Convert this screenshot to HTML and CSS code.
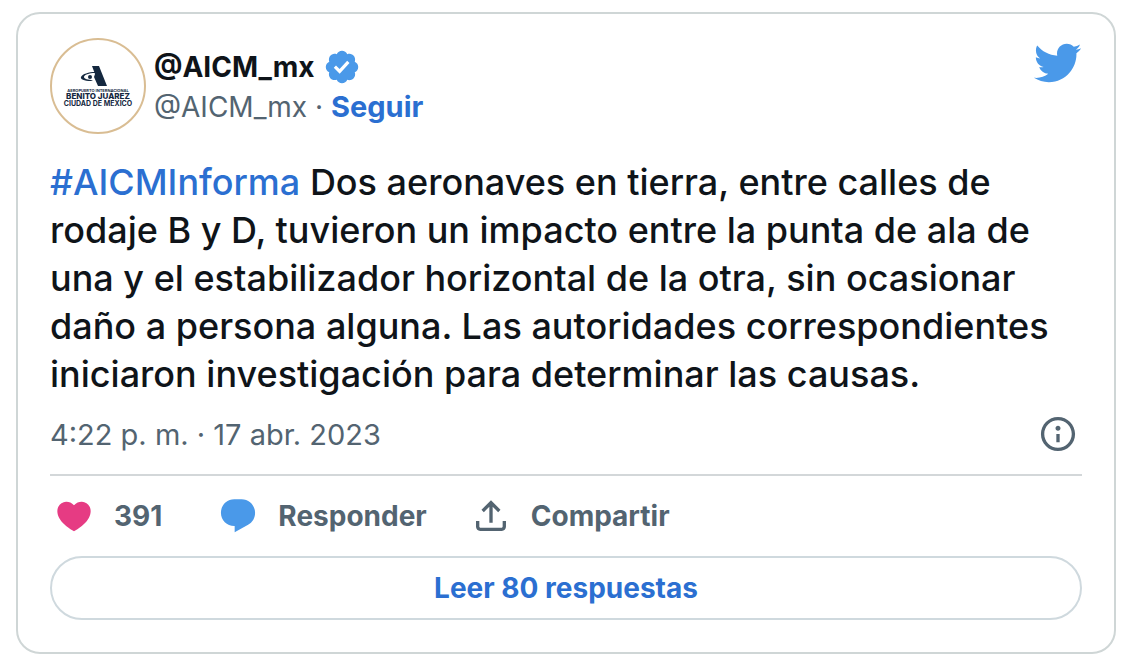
FILE: index.html
```html
<!DOCTYPE html>
<html lang="es">
    <head>
        <meta charset="utf-8">
        <meta name="viewport" content="width=device-width, initial-scale=1">
        <title>@AICM_mx</title>
        <link rel="stylesheet" href="styles.css">
    </head>
    <body>
        <article class="tweet">
            <header class="tweet-header">
                <a class="avatar" href="#" aria-label="@AICM_mx">
                    <svg viewBox="0 0 96 96">
                        <circle class="avatar-ring" cx="48" cy="48" r="47"/>
                        <path class="avatar-mark" d="M42 28h7l8 20h-9l-4-9 1-3z"/>
                        <path class="avatar-mark" d="M45 34c-6 0-13 2-14 5-1 2 3 4 10 4l2-1c-5 0-9-1-9-3 0-2 5-4 11-4z"/>
                        <circle class="avatar-mark" cx="40" cy="39" r="2"/>
                        <text class="avatar-small" x="48" y="54">AEROPUERTO INTERNACIONAL</text>
                        <text class="avatar-big" x="48" y="61">BENITO JUÁREZ</text>
                        <text class="avatar-mid" x="48" y="68">CIUDAD DE MÉXICO</text>
                    </svg>
                </a>
                <div class="author">
                    <a class="name" href="#">@AICM_mx
                        <svg class="verified" viewBox="0 0 22 22"><path d="M20.396 11c-.018-.646-.215-1.275-.57-1.816-.354-.54-.852-.972-1.438-1.246.223-.607.27-1.264.14-1.897-.131-.634-.437-1.218-.882-1.687-.47-.445-1.053-.75-1.687-.882-.633-.13-1.29-.083-1.897.14-.273-.587-.704-1.086-1.245-1.44S11.647 1.62 11 1.604c-.646.017-1.273.213-1.813.568s-.969.854-1.24 1.44c-.608-.223-1.267-.272-1.902-.14-.635.13-1.22.436-1.69.882-.445.47-.749 1.055-.878 1.688-.13.633-.08 1.29.144 1.896-.587.274-1.087.705-1.443 1.245-.356.54-.555 1.17-.574 1.817.02.647.218 1.276.574 1.817.356.54.856.972 1.443 1.245-.224.606-.274 1.263-.144 1.896.13.634.433 1.218.877 1.688.47.443 1.054.747 1.687.878.633.132 1.29.084 1.897-.136.274.586.705 1.084 1.246 1.439.54.354 1.17.551 1.816.569.647-.016 1.276-.213 1.817-.567s.972-.854 1.245-1.44c.604.239 1.266.296 1.903.164.636-.132 1.22-.447 1.68-.907.46-.46.776-1.044.908-1.681s.075-1.299-.165-1.903c.586-.274 1.084-.705 1.439-1.246.354-.54.551-1.17.569-1.816zM9.662 14.85l-3.429-3.428 1.293-1.302 2.072 2.072 4.4-4.794 1.347 1.246z"/></svg>
                    </a>
                    <div class="handle"><a href="#">@AICM_mx</a> · <a class="follow" href="#">Seguir</a></div>
                </div>
                <a class="bird" href="#" aria-label="Twitter">
                    <svg viewBox="0 0 24 24"><path d="M23.643 4.937c-.835.37-1.732.62-2.675.733.962-.576 1.7-1.49 2.048-2.578-.9.534-1.897.922-2.958 1.13-.85-.904-2.06-1.47-3.4-1.47-2.572 0-4.658 2.086-4.658 4.66 0 .364.042.718.12 1.06-3.873-.195-7.304-2.05-9.602-4.868-.4.69-.63 1.49-.63 2.342 0 1.616.823 3.043 2.072 3.878-.764-.025-1.482-.234-2.11-.583v.06c0 2.257 1.605 4.14 3.737 4.568-.392.106-.803.162-1.227.162-.3 0-.593-.028-.877-.082.593 1.85 2.313 3.198 4.352 3.234-1.595 1.25-3.604 1.995-5.786 1.995-.376 0-.747-.022-1.112-.065 2.062 1.323 4.51 2.093 7.14 2.093 8.57 0 13.255-7.098 13.255-13.254 0-.2-.005-.402-.014-.602.91-.658 1.7-1.477 2.323-2.41z"/></svg>
                </a>
            </header>
            <p class="tweet-text"><a href="#">#AICMInforma</a> Dos aeronaves en tierra, entre calles de rodaje B y D, tuvieron un impacto entre la punta de ala de una y el estabilizador horizontal de la otra, sin ocasionar daño a persona alguna. Las autoridades correspondientes iniciaron investigación para determinar las causas.</p>
            <div class="meta">
                <a href="#">4:22 p. m. · 17 abr. 2023</a>
                <a class="info" href="#" aria-label="Información">
                    <svg class="icon" viewBox="0 0 24 24"><path d="M13.5 8.5c0 .83-.67 1.5-1.5 1.5s-1.5-.67-1.5-1.5S11.17 7 12 7s1.5.67 1.5 1.5zM13 17v-5h-2v5h2zm-1 5.25c5.66 0 10.25-4.59 10.25-10.25S17.66 1.75 12 1.75 1.75 6.34 1.75 12 6.34 22.25 12 22.25zM20.25 12c0 4.56-3.69 8.25-8.25 8.25S3.75 16.56 3.75 12 7.44 3.75 12 3.75s8.25 3.69 8.25 8.25z"/></svg>
                </a>
            </div>
            <div class="actions">
                <button class="like" type="button">
                    <svg class="icon" viewBox="0 0 24 24"><path d="M20.884 13.19c-1.351 2.48-4.001 5.12-8.379 7.67l-.503.3-.504-.3c-4.379-2.55-7.029-5.19-8.382-7.67-1.36-2.5-1.41-4.86-.514-6.67.887-1.79 2.647-2.91 4.601-3.01 1.651-.09 3.368.56 4.798 2.01 1.429-1.45 3.146-2.1 4.796-2.01 1.954.1 3.714 1.22 4.601 3.01.896 1.81.846 4.17-.514 6.67z"/></svg>
                    391
                </button>
                <button class="reply" type="button">
                    <svg class="icon" viewBox="0 0 24 24"><path d="M1.751 10c0-4.42 3.584-8 8.005-8h4.366c4.49 0 8.129 3.64 8.129 8.13 0 2.96-1.607 5.68-4.196 7.11l-8.054 4.46v-3.69h-.067c-4.49.1-8.183-3.51-8.183-8.01z"/></svg>
                    Responder
                </button>
                <button type="button">
                    <svg class="icon" viewBox="0 0 24 24"><path d="M12 2.59l5.7 5.7-1.41 1.42L13 6.41V16h-2V6.41l-3.3 3.3-1.41-1.42L12 2.59zM21 15l-.02 3.51c0 1.38-1.12 2.49-2.5 2.49H5.5C4.11 21 3 19.88 3 18.5V15h2v3.5c0 .28.22.5.5.5h12.98c.28 0 .5-.22.5-.5L19 15h2z"/></svg>
                    Compartir
                </button>
            </div>
            <a class="replies" href="#">Leer 80 respuestas</a>
        </article>
    </body>
</html>
```

FILE: styles.css
```css
*{
    box-sizing: border-box;
}
body{
    margin: 12px 22px 18px 16px;
    background-color: #fff;
    color: #0f1419;
    font-family: Inter, "Liberation Sans", sans-serif;
    font-size: 28px;
}
a{
    color: inherit;
    text-decoration: none;
}
svg{
    display: block;
    fill: currentColor;
}
.tweet{
    padding: 24px 32px 32px;
    border: 2px solid #cfd6d6;
    border-radius: 24px;
}
.tweet-header{
    display: flex;
    align-items: center;
    gap: 8px;
}
.avatar{
    width: 96px;
    height: 96px;
}
.avatar-ring{
    fill: #fff;
    stroke: #d9bd93;
    stroke-width: 2;
}
.avatar-mark{
    fill: #14283f;
}
.avatar text{
    fill: #14283f;
    font-weight: 700;
    text-anchor: middle;
}
.avatar .avatar-small{
    font-size: 4px;
}
.avatar .avatar-big{
    font-size: 8px;
    font-weight: 800;
}
.avatar .avatar-mid{
    font-size: 7px;
}
.author{
    flex: 1;
    padding-top: 2px;
    line-height: 40px;
}
.name{
    display: flex;
    align-items: center;
    gap: 8px;
    font-weight: 700;
}
.verified{
    width: 38px;
    height: 38px;
    color: #4a99e9;
}
.handle{
    color: #536471;
}
.follow{
    color: #2b6fd1;
    font-size: 29px;
    font-weight: 700;
}
.bird{
    align-self: flex-start;
    width: 50px;
    color: #4a99e9;
}
.tweet-text{
    margin: 24px 0 12px;
    font-size: 36px;
    font-weight: 450;
    line-height: 48px;
}
.tweet-text a{
    color: #2b6fd1;
}
.meta{
    display: flex;
    align-items: center;
    justify-content: space-between;
    height: 66px;
    padding: 0 4px 16px 0;
    border-bottom: 2px solid #d3d7d9;
    color: #536471;
    font-size: 29px;
}
.icon{
    width: 40px;
    height: 40px;
}
.actions{
    display: flex;
    align-items: center;
    gap: 44px;
    height: 80px;
    padding-left: 4px;
}
.actions button{
    display: flex;
    align-items: center;
    gap: 20px;
    padding: 0;
    border: 0;
    background: none;
    color: #536471;
    font: inherit;
    font-weight: 700;
}
.actions .like{
    padding-right: 12px;
}
.like .icon{
    color: #e63b83;
}
.reply .icon{
    color: #4a99e9;
}
.replies{
    display: block;
    border: 2px solid #cfd9de;
    border-radius: 32px;
    color: #2b6fd1;
    font-weight: 700;
    line-height: 60px;
    text-align: center;
}
```
